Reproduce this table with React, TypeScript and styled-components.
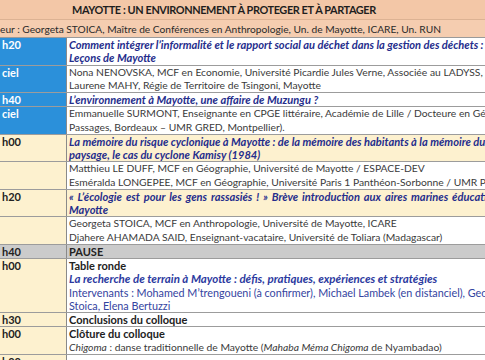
import React from 'react';
import styled, { createGlobalStyle } from 'styled-components';

type Tone = 'blue' | 'cream' | 'white' | 'gray';

const toneBg: Record<Tone, string> = {
    blue: '#2b90da',
    cream: '#fdf1cf',
    white: '#ffffff',
    gray: '#cbcbcb',
};

const GlobalStyle = createGlobalStyle`
    html, body {
        margin: 0;
        padding: 0;
        background: #ffffff;
        overflow: hidden;
    }

    body {
        font-family: Lato, "Liberation Sans", sans-serif;
        font-size: 10.3px;
        color: #3a3a3a;
    }
`;

const Sheet = styled.div`
    width: 640px;
    display: flex;
    flex-direction: column;
`;

const TitleRow = styled.div`
    height: 19px;
    background: #f3c7a7;
    border-bottom: 1px solid #dcb293;

    display: flex;
    align-items: center;
    padding-left: 72px;

    font-size: 10.9px;
    letter-spacing: -0.4px;
    font-weight: 700;
    color: #1e1e1e;
    white-space: nowrap;
`;

const SubRow = styled.div`
    height: 17px;
    background: #f5cdb0;
    border-bottom: 1px solid #9a9a9a;

    display: flex;
    align-items: center;

    font-size: 10.2px;
    color: #2a2a2a;
    white-space: nowrap;
`;

const Row = styled.div`
    display: grid;
    grid-template-columns: 67px 1fr;
    border-bottom: 1px solid #9c9c9c;
`;

const TimeCell = styled.div<{ $tone: Tone }>`
    background: ${({ $tone }) => toneBg[$tone]};
    border-right: 1px solid #8a8a8a;
    padding-left: 2px;

    line-height: 13.25px;
    font-size: 11px;
    font-weight: 700;
    color: ${({ $tone }) => ($tone === 'blue' ? '#ffffff' : '#222222')};
    white-space: nowrap;
`;

const Body = styled.div<{ $tone: Tone }>`
    background: ${({ $tone }) => toneBg[$tone]};
    padding-left: 2px;
    display: flex;
    flex-direction: column;
    overflow: hidden;
`;

const Line = styled.div`
    line-height: 13.25px;
    height: 13.25px;
    white-space: nowrap;
`;

const Talk = styled(Line)<{ $spread?: boolean }>`
    font-size: 11.1px;
    font-style: italic;
    font-weight: 700;
    color: #252d8c;
    word-spacing: ${({ $spread }) => ($spread ? '1.5px' : 'normal')};
`;

const Strong = styled(Line)`
    font-size: 11px;
    font-weight: 700;
    color: #222222;
`;

const BlueLine = styled(Line)`
    font-size: 10.8px;
    color: #3444a0;
`;

const BlueTalk = styled(Line)`
    font-size: 11.5px;
    font-style: italic;
    font-weight: 700;
    color: #2c3aa0;
`;

export default function App() {
    return (
        <>
            <GlobalStyle />
            <Sheet>
                <TitleRow>MAYOTTE : UN ENVIRONNEMENT À PROTEGER ET À PARTAGER</TitleRow>
                <SubRow>
                    eur : Georgeta STOICA, Maître de Conférences en Anthropologie, Un. de Mayotte, ICARE, Un. RUN
                </SubRow>

                <Row>
                    <TimeCell $tone="blue">h20</TimeCell>
                    <Body $tone="white">
                        <Talk>Comment intégrer l’informalité et le rapport social au déchet dans la gestion des déchets :</Talk>
                        <Talk>Leçons de Mayotte</Talk>
                    </Body>
                </Row>

                <Row>
                    <TimeCell $tone="blue">ciel</TimeCell>
                    <Body $tone="white">
                        <Line>Nona NENOVSKA, MCF en Economie, Université Picardie Jules Verne, Associée au LADYSS, UMR 7533</Line>
                        <Line>Laurene MAHY, Régie de Territoire de Tsingoni, Mayotte</Line>
                    </Body>
                </Row>

                <Row>
                    <TimeCell $tone="blue">h40</TimeCell>
                    <Body $tone="white">
                        <Talk>L’environnement à Mayotte, une affaire de Muzungu ?</Talk>
                    </Body>
                </Row>

                <Row>
                    <TimeCell $tone="blue">ciel</TimeCell>
                    <Body $tone="white">
                        <Line>Emmanuelle SURMONT, Enseignante en CPGE littéraire, Académie de Lille / Docteure en Géographie (UMR</Line>
                        <Line>Passages, Bordeaux – UMR GRED, Montpellier).</Line>
                    </Body>
                </Row>

                <Row>
                    <TimeCell $tone="cream">h00</TimeCell>
                    <Body $tone="cream">
                        <Talk>La mémoire du risque cyclonique à Mayotte : de la mémoire des habitants à la mémoire du</Talk>
                        <Talk>paysage, le cas du cyclone Kamisy (1984)</Talk>
                    </Body>
                </Row>

                <Row>
                    <TimeCell $tone="cream" />
                    <Body $tone="white">
                        <Line>Matthieu LE DUFF, MCF en Géographie, Université de Mayotte / ESPACE-DEV</Line>
                        <Line>Esméralda LONGEPEE, MCF en Géographie, Université Paris 1 Panthéon-Sorbonne / UMR PRODIG</Line>
                    </Body>
                </Row>

                <Row>
                    <TimeCell $tone="cream">h20</TimeCell>
                    <Body $tone="cream">
                        <Talk $spread>« L’écologie est pour les gens rassasiés ! » Brève introduction aux aires marines éducatives à</Talk>
                        <Talk>Mayotte</Talk>
                    </Body>
                </Row>

                <Row>
                    <TimeCell $tone="cream" />
                    <Body $tone="white">
                        <Line>Georgeta STOICA, MCF en Anthropologie, Université de Mayotte, ICARE</Line>
                        <Line>Djahere AHAMADA SAID, Enseignant-vacataire, Université de Toliara (Madagascar)</Line>
                    </Body>
                </Row>

                <Row>
                    <TimeCell $tone="gray">h40</TimeCell>
                    <Body $tone="gray">
                        <Strong>PAUSE</Strong>
                    </Body>
                </Row>

                <Row>
                    <TimeCell $tone="cream">h00</TimeCell>
                    <Body $tone="white">
                        <Strong>Table ronde</Strong>
                        <BlueTalk>La recherche de terrain à Mayotte : défis, pratiques, expériences et stratégies</BlueTalk>
                        <BlueLine>Intervenants : Mohamed M’trengoueni (à confirmer), Michael Lambek (en distanciel), Georgeta</BlueLine>
                        <BlueLine>Stoica, Elena Bertuzzi</BlueLine>
                    </Body>
                </Row>

                <Row>
                    <TimeCell $tone="cream">h30</TimeCell>
                    <Body $tone="white">
                        <Strong>Conclusions du colloque</Strong>
                    </Body>
                </Row>

                <Row>
                    <TimeCell $tone="cream">h00</TimeCell>
                    <Body $tone="white">
                        <Strong>Clôture du colloque</Strong>
                        <Line>
                            <i>Chigoma</i> : danse traditionnelle de Mayotte (<i>Mahaba Méma Chigoma</i> de Nyambadao)
                        </Line>
                    </Body>
                </Row>

                <Row>
                    <TimeCell $tone="cream">h00</TimeCell>
                    <Body $tone="white">
                        <Line>&nbsp;</Line>
                    </Body>
                </Row>
            </Sheet>
        </>
    );
}
